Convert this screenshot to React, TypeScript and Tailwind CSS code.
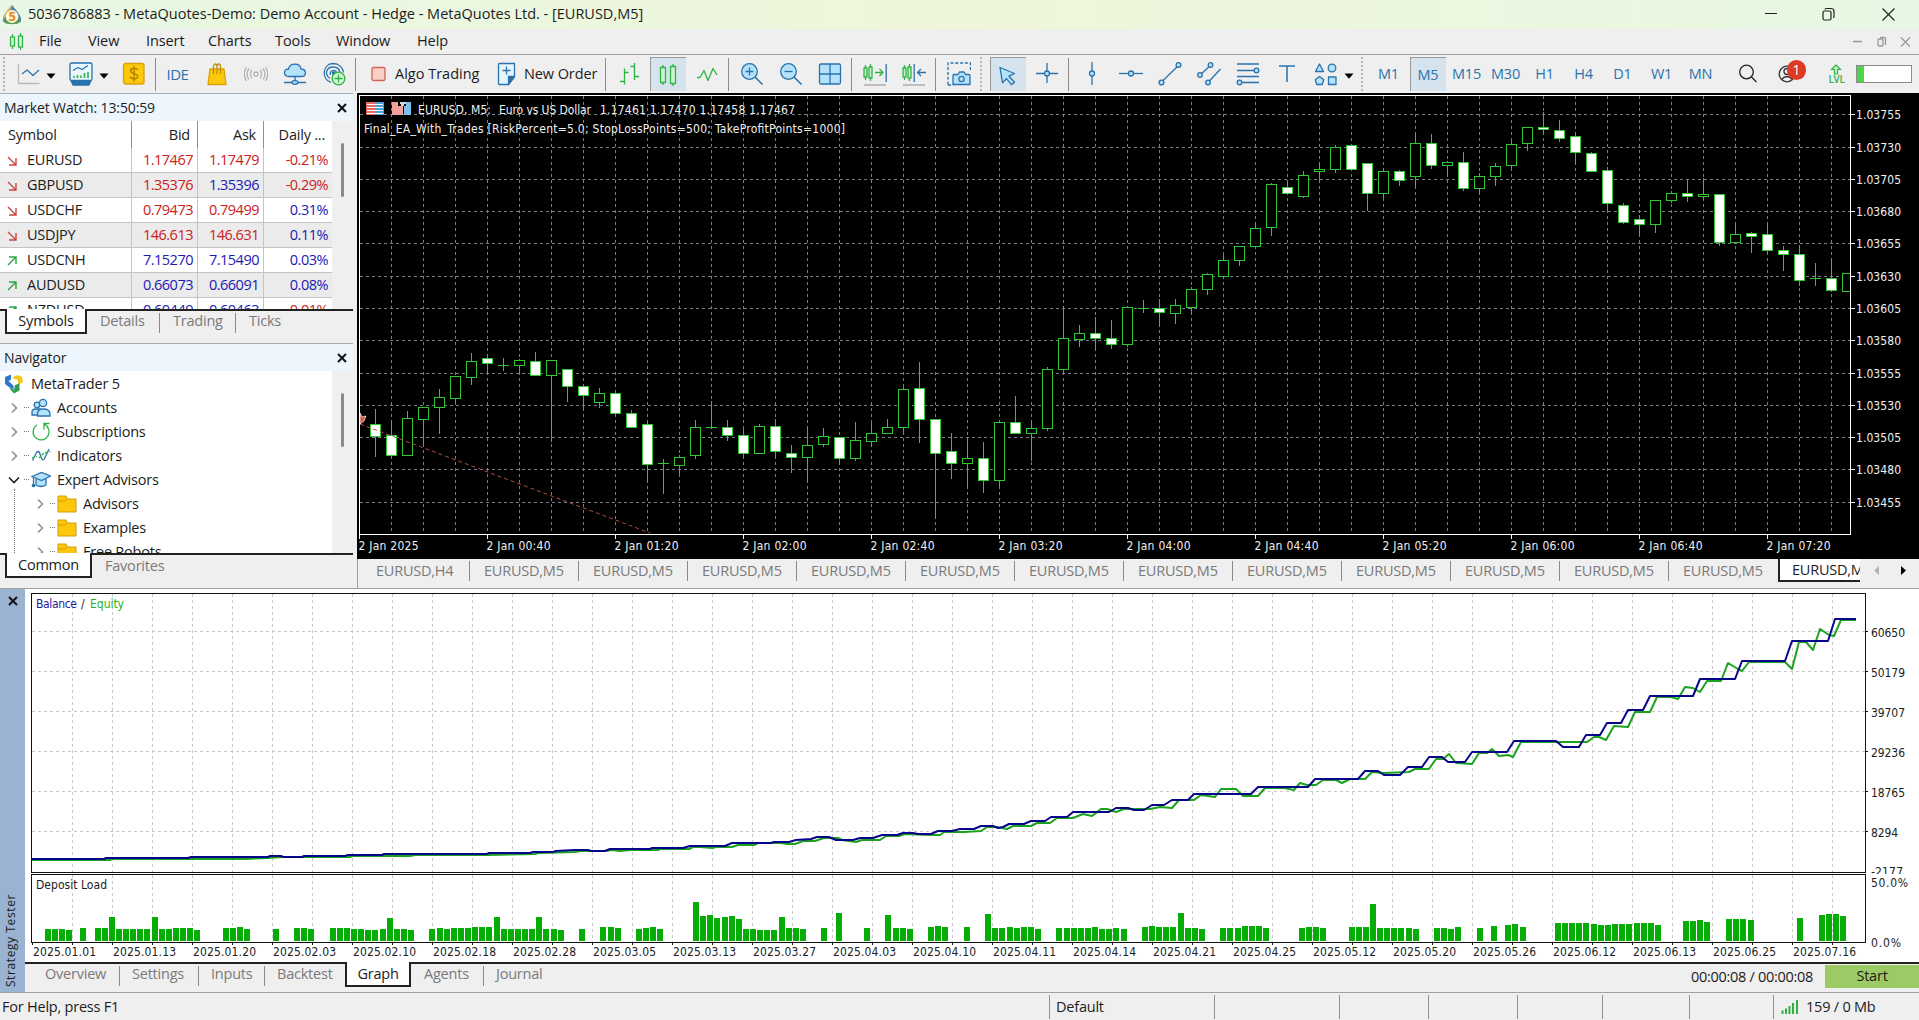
import type { ReactNode } from "react";

type Candle = [high: number, top: number, bottom: number, low: number, kind: "u" | "d" | "x"];

const BLUE = "#2a72ac";
const SKY = "#b5e2fb";
const GREEN = "#2eb344";

const CHART_FONT = "'DejaVu Sans Condensed', 'DejaVu Sans', sans-serif";

// One candle every 16px, starting one step right of the plot's left edge.
const candles: Candle[] = [
  [409, 424, 436, 456, "d"], [420, 435, 455, 457, "d"], [411, 418, 455, 455, "u"], [407, 407, 419, 445, "u"],
  [389, 397, 407, 433, "u"], [376, 376, 398, 402, "u"], [353, 361, 377, 384, "u"], [354, 358, 363, 373, "d"],
  [358, 365, 365, 371, "x"], [359, 360, 365, 372, "u"], [352, 361, 375, 375, "d"], [360, 360, 375, 441, "u"],
  [369, 369, 386, 401, "d"], [385, 386, 395, 408, "d"], [388, 393, 402, 407, "u"], [392, 393, 413, 415, "d"],
  [410, 413, 427, 427, "d"], [421, 424, 464, 481, "d"], [459, 463, 463, 494, "x"], [455, 457, 465, 473, "u"],
  [420, 427, 455, 458, "u"], [401, 427, 427, 429, "x"], [420, 427, 435, 440, "d"], [429, 435, 453, 457, "d"],
  [424, 426, 453, 453, "u"], [419, 426, 451, 457, "d"], [445, 453, 457, 472, "d"], [427, 445, 457, 481, "u"],
  [428, 436, 444, 446, "u"], [437, 437, 458, 463, "d"], [422, 440, 458, 460, "u"], [423, 433, 441, 446, "u"],
  [419, 427, 433, 433, "u"], [387, 389, 427, 433, "u"], [362, 388, 419, 442, "d"], [419, 419, 453, 517, "d"],
  [433, 451, 463, 478, "d"], [437, 458, 463, 488, "u"], [442, 458, 480, 492, "d"], [421, 422, 480, 486, "u"],
  [396, 422, 433, 433, "d"], [420, 428, 433, 460, "u"], [367, 369, 428, 430, "u"], [306, 338, 369, 371, "u"],
  [325, 333, 339, 346, "u"], [317, 333, 338, 349, "d"], [320, 338, 344, 348, "d"], [306, 307, 344, 346, "u"],
  [300, 308, 308, 313, "x"], [299, 308, 312, 325, "d"], [299, 305, 313, 323, "u"], [287, 289, 307, 313, "u"],
  [273, 274, 289, 294, "u"], [255, 260, 276, 278, "u"], [246, 246, 260, 265, "u"], [222, 228, 246, 247, "u"],
  [183, 184, 227, 235, "u"], [180, 187, 193, 194, "d"], [171, 175, 196, 197, "u"], [162, 169, 171, 180, "u"],
  [145, 147, 169, 172, "u"], [144, 145, 169, 170, "d"], [163, 163, 193, 210, "d"], [169, 171, 193, 197, "u"],
  [170, 171, 180, 185, "d"], [133, 143, 176, 186, "u"], [134, 143, 165, 168, "d"], [161, 162, 165, 176, "u"],
  [152, 162, 188, 190, "d"], [173, 176, 188, 193, "u"], [163, 166, 176, 185, "u"], [141, 144, 165, 167, "u"],
  [127, 127, 143, 150, "u"], [112, 127, 129, 133, "d"], [120, 130, 138, 141, "d"], [132, 136, 152, 163, "d"],
  [152, 153, 171, 171, "d"], [167, 170, 203, 209, "d"], [203, 205, 222, 223, "d"], [215, 219, 224, 234, "d"],
  [200, 200, 224, 232, "u"], [191, 193, 200, 202, "u"], [179, 193, 196, 201, "d"], [178, 194, 196, 199, "u"],
  [194, 194, 242, 245, "d"], [225, 234, 242, 243, "u"], [232, 233, 236, 252, "d"], [225, 234, 250, 253, "d"],
  [246, 250, 254, 270, "d"], [245, 254, 280, 285, "d"], [263, 278, 278, 286, "x"], [258, 278, 290, 291, "d"],
  [273, 273, 291, 291, "u"],
];

const priceGrid: [number, string][] = [
  [114, "1.03755"], [147, "1.03730"], [179, "1.03705"], [211, "1.03680"], [243, "1.03655"],
  [276, "1.03630"], [308, "1.03605"], [340, "1.03580"], [373, "1.03555"], [405, "1.03530"],
  [437, "1.03505"], [469, "1.03480"], [502, "1.03455"],
];

const timeLabels = [
  "2 Jan 2025", "2 Jan 00:40", "2 Jan 01:20", "2 Jan 02:00", "2 Jan 02:40", "2 Jan 03:20",
  "2 Jan 04:00", "2 Jan 04:40", "2 Jan 05:20", "2 Jan 06:00", "2 Jan 06:40", "2 Jan 07:20",
];

const balance =
  "32,859 104,859 106,858 188,858 191,857 268,857 270,856 281,856 283,857 302,857 304,856 345,856 348,855 382,855 384,854 487,854 489,853 530,853 533,852 553,852 556,851 575,850 588,850 591,851 605,851 610,849 650,849 652,848 683,848 690,846 725,846 732,843 771,843 774,842 789,842 796,840 811,839 817,837 829,837 836,840 853,840 860,838 873,838 882,835 897,835 903,833 913,833 918,834 931,834 938,831 952,831 960,829 974,829 981,826 993,826 998,828 1003,827 1009,824 1024,824 1031,821 1045,821 1051,817 1067,817 1073,812 1109,812 1116,808 1128,808 1134,810 1144,810 1152,805 1164,805 1172,800 1188,800 1194,794 1251,794 1258,787 1308,787 1315,779 1358,779 1365,771 1378,771 1384,775 1400,775 1408,767 1422,767 1429,757 1442,757 1448,762 1465,762 1472,752 1507,752 1514,741 1556,741 1563,747 1579,747 1586,735 1600,735 1607,723 1621,723 1628,710 1643,710 1650,696 1693,696 1700,679 1735,679 1742,661 1785,661 1792,641 1828,641 1835,619 1856,619";

const equity =
  "32,860 110,860 112,859 190,859 207,859 225,859 245,859 268,858 283,857 302,857 350,857 352,856 410,856 415,855 487,855 535,854 538,853 575,852 580,851 605,851 612,850 620,851 630,850 658,850 660,849 689,849 693,847 700,847 713,848 715,847 732,847 738,845 754,845 758,843 781,843 787,844 795,844 803,841 815,841 824,838 838,838 842,840 856,842 862,840 880,840 886,836 899,836 905,834 930,835 940,835 944,832 964,832 981,831 987,827 996,827 1007,829 1013,826 1031,826 1037,823 1050,823 1057,818 1073,818 1083,814 1092,816 1101,809 1107,809 1116,812 1124,809 1132,809 1150,809 1160,807 1172,808 1179,800 1194,800 1201,795 1215,797 1221,789 1236,789 1243,796 1258,796 1265,788 1284,788 1294,790 1300,783 1307,785 1316,785 1323,780 1336,780 1342,783 1350,779 1365,779 1372,772 1384,773 1409,772 1415,769 1429,769 1436,759 1443,759 1449,754 1456,763 1472,764 1479,753 1487,753 1492,749 1499,756 1508,755 1513,757 1521,742 1587,742 1594,737 1599,737 1606,740 1614,726 1628,727 1635,712 1650,712 1657,697 1671,697 1678,699 1685,687 1693,688 1700,692 1707,681 1721,681 1728,663 1738,669 1742,671 1749,662 1785,662 1792,669 1799,642 1806,642 1813,650 1820,629 1829,635 1834,636 1841,620 1856,620";

// [x, top] pairs of the deposit load histogram
const loadBars: [number, number][] = [
  [45, 929], [52, 929], [59, 929], [66, 930], [80, 928], [95, 928], [102, 928], [109, 917], [116, 929], [123, 929],
  [130, 929], [137, 929], [144, 929], [152, 917], [159, 929], [166, 929], [173, 928], [180, 928], [187, 928], [194, 930],
  [223, 928], [230, 928], [237, 927], [244, 929], [273, 929], [294, 928], [301, 928], [308, 929], [330, 928], [337, 928],
  [344, 928], [351, 929], [358, 929], [365, 930], [372, 930], [380, 929], [387, 918], [394, 929], [401, 929], [408, 930],
  [429, 929], [437, 928], [444, 929], [451, 928], [458, 928], [465, 928], [472, 927], [479, 927], [486, 927], [494, 917],
  [501, 929], [508, 929], [515, 929], [522, 929], [529, 929], [536, 917], [543, 929], [551, 929], [558, 930], [579, 929],
  [600, 927], [608, 927], [615, 928], [636, 929], [643, 928], [650, 927], [657, 929], [693, 902], [700, 916], [707, 915],
  [714, 918], [722, 917], [729, 916], [736, 919], [743, 929], [750, 929], [757, 930], [764, 930], [771, 930], [779, 917],
  [786, 928], [793, 928], [800, 929], [821, 928], [836, 913], [864, 928], [885, 915], [893, 928], [900, 928], [907, 929],
  [928, 927], [935, 926], [942, 927], [964, 927], [985, 914], [992, 928], [999, 928], [1007, 927], [1014, 928], [1021, 927],
  [1028, 927], [1035, 929], [1056, 928], [1064, 928], [1071, 928], [1078, 928], [1085, 928], [1092, 927], [1099, 929],
  [1106, 929], [1113, 928], [1121, 929], [1142, 927], [1149, 926], [1156, 927], [1163, 927], [1170, 927], [1178, 913],
  [1185, 928], [1192, 928], [1199, 929], [1220, 928], [1227, 928], [1235, 928], [1242, 926], [1249, 926], [1256, 926],
  [1263, 928], [1299, 928], [1306, 927], [1313, 927], [1320, 928], [1349, 927], [1356, 927], [1363, 927], [1370, 904],
  [1377, 928], [1384, 928], [1391, 928], [1398, 928], [1406, 928], [1413, 929], [1434, 928], [1441, 928], [1448, 929],
  [1455, 927], [1477, 928], [1491, 926], [1505, 925], [1512, 924], [1520, 927], [1555, 923], [1562, 923], [1569, 923],
  [1576, 923], [1583, 923], [1591, 924], [1598, 925], [1605, 925], [1612, 924], [1619, 924], [1626, 924], [1634, 923],
  [1641, 923], [1648, 923], [1655, 925], [1683, 921], [1690, 921], [1697, 920], [1704, 922], [1726, 919], [1733, 919],
  [1740, 919], [1748, 920], [1797, 918], [1819, 915], [1826, 914], [1833, 914], [1840, 916],
];

const balanceScale: [number, string, number][] = [
  [631, "60650", 34], [671, "50179", 34], [711, "39707", 34], [751, "29236", 34], [791, "18765", 34], [831, "8294", 27],
];

const testerDates = [
  "2025.01.01", "2025.01.13", "2025.01.20", "2025.02.03", "2025.02.10", "2025.02.18", "2025.02.28", "2025.03.05",
  "2025.03.13", "2025.03.27", "2025.04.03", "2025.04.10", "2025.04.11", "2025.04.14", "2025.04.21", "2025.04.25",
  "2025.05.12", "2025.05.20", "2025.05.26", "2025.06.12", "2025.06.13", "2025.06.25", "2025.07.16",
];

const RED_TEXT = "text-[#cc2020]";
const BLUE_TEXT = "text-[#1a1ab4]";

const quotes = [
  { symbol: "EURUSD", bid: "1.17467", ask: "1.17479", daily: "-0.21%", up: false, tones: [RED_TEXT, RED_TEXT, RED_TEXT] },
  { symbol: "GBPUSD", bid: "1.35376", ask: "1.35396", daily: "-0.29%", up: false, tones: [RED_TEXT, BLUE_TEXT, RED_TEXT] },
  { symbol: "USDCHF", bid: "0.79473", ask: "0.79499", daily: "0.31%", up: false, tones: [RED_TEXT, RED_TEXT, BLUE_TEXT] },
  { symbol: "USDJPY", bid: "146.613", ask: "146.631", daily: "0.11%", up: false, tones: [RED_TEXT, RED_TEXT, BLUE_TEXT] },
  { symbol: "USDCNH", bid: "7.15270", ask: "7.15490", daily: "0.03%", up: true, tones: [BLUE_TEXT, BLUE_TEXT, BLUE_TEXT] },
  { symbol: "AUDUSD", bid: "0.66073", ask: "0.66091", daily: "0.08%", up: true, tones: [BLUE_TEXT, BLUE_TEXT, BLUE_TEXT] },
  { symbol: "NZDUSD", bid: "0.60449", ask: "0.60463", daily: "-0.01%", up: true, tones: [BLUE_TEXT, BLUE_TEXT, RED_TEXT] },
];

export default function App() {
  return (
    <div className="flex h-[1020px] w-[1919px] flex-col overflow-hidden bg-[#efefef] font-['Open_Sans','Noto_Sans',sans-serif] text-[14.5px] leading-none tracking-[-0.22px] whitespace-nowrap text-[#1c1c1c]">
      <TitleBar />
      <MenuBar />
      <Toolbar />
      <div className="flex h-[495px] shrink-0">
        <div className="flex w-[353px] shrink-0 flex-col">
          <MarketWatch />
          <Navigator />
        </div>
        <div className="flex w-[1562px] shrink-0 flex-col pl-1">
          <PriceChart />
          <ChartTabs />
        </div>
      </div>
      <StrategyTester />
      <StatusBar />
    </div>
  );
}

function TitleBar() {
  return (
    <div className="flex h-[29px] shrink-0 items-center bg-linear-to-r from-[#e8f8e4] via-[#eff6da] to-[#e8f8e4]">
      <svg className="ml-[2px] size-5" viewBox="0 0 20 20">
        <path d="M10 0C6 5 0 11 1 16c1 4 17 4 18 0C20 11 14 5 10 0Z" fill="#4c86ad" />
        <path d="M10 0C6 5 0 11 1 16c2-6 8-8 9-16Z" fill="#d9b24a" />
        <path d="M2 17c3 3 13 3 16 0l-2-4H5Z" fill="#5f9d4f" />
        <circle cx="10" cy="11.5" r="6.4" fill="#fff3dc" />
        <text x="10" y="16.3" textAnchor="middle" fontSize="13" fontWeight="700" fill="#e58b1c">5</text>
      </svg>
      <span className="ml-[6px] tracking-normal">
        5036786883 - MetaQuotes-Demo: Demo Account - Hedge - MetaQuotes Ltd. - [EURUSD,M5]
      </span>
      <svg className="ml-auto h-[29px] w-[180px]" viewBox="0 0 180 29" fill="none" stroke="#222" strokeWidth="1.2">
        <path d="M26 13.5h12M143.500 8.500l12 12M155.500 8.500l-12 12" />
        <rect x="84" y="11" width="8" height="9" rx="1.500" />
        <path d="M86 9.500q0-1 1-1h5q3 0 3 3v5q0 1-1 1" />
      </svg>
    </div>
  );
}

function MenuBar() {
  return (
    <div className="flex h-[26px] shrink-0 items-center border-b border-[#a0a0a0] tracking-[-0.1px]">
      <svg className="ml-[9px] h-[20px] w-[16px]" viewBox="0 0 16 20" fill="#c9f5cf" stroke={GREEN} strokeWidth="1.2">
        <path d="M3.500 2v15M11.500 1v17" />
        <rect x="1.500" y="5" width="4" height="9" />
        <rect x="9.500" y="4" width="4" height="11" />
      </svg>
      <span className="ml-[14px] w-[49px]">File</span>
      <span className="w-[58px]">View</span>
      <span className="w-[62px]">Insert</span>
      <span className="w-[67px]">Charts</span>
      <span className="w-[61px]">Tools</span>
      <span className="w-[81px]">Window</span>
      <span>Help</span>
      <svg className="ml-auto h-[24px] w-[72px]" viewBox="0 0 72 24" fill="none" stroke="#999" strokeWidth="1.3">
        <path d="M6 11.500h9M54 7.500l9 9M63 7.500l-9 9" />
        <rect x="31" y="9" width="5" height="7" rx="1" />
        <path d="M33 7.500h4q1.500 0 1.500 1.500v6" />
      </svg>
    </div>
  );
}

function Slot({ active, children }: { active?: boolean; children: ReactNode }) {
  return (
    <div className="flex w-[39px] shrink-0 items-center justify-center">
      {active ? (
        <div className="flex h-[34px] w-9 items-center justify-center border-t border-l border-[#9a9a9a] bg-[#d5e3ef]">
          {children}
        </div>
      ) : (
        children
      )}
    </div>
  );
}

function Icon({ children, className = "" }: { children: ReactNode; className?: string }) {
  return (
    <svg
      className={`size-6 shrink-0 ${className}`}
      viewBox="0 0 24 24"
      fill="none"
      stroke={BLUE}
      strokeWidth="1.3"
      strokeLinejoin="round"
    >
      {children}
    </svg>
  );
}

function Separator() {
  return <div className="mr-[3px] ml-[2px] h-[33px] w-px shrink-0 bg-[#8c8c8c]" />;
}

function Grip({ className = "" }: { className?: string }) {
  return <div className={`h-[34px] w-[2px] shrink-0 border-l-2 border-dotted border-[#b4b4b4] ${className}`} />;
}

function DropArrow({ className = "" }: { className?: string }) {
  return (
    <svg className={`mt-1 h-[6px] w-[10px] shrink-0 ${className}`} viewBox="0 0 10 6">
      <path d="M0.500 0.500h9L5 5.800Z" fill="#000" />
    </svg>
  );
}

function Toolbar() {
  return (
    <div className="flex h-[38px] shrink-0 items-center">
      <Grip className="ml-[3px]" />
      <Icon className="ml-3">
        <path d="M1.500 2v19.500h21" stroke="#b9b9b9" />
        <path d="M5 12l5-4 6 5.500 6-5.500" />
      </Icon>
      <DropArrow className="ml-[5px]" />
      <Icon className="ml-[13px]">
        <path d="M2 18.500l2 4.500h16l2-4.500Z" fill={BLUE} />
        <rect x="1" y="1" width="22" height="17.500" rx="1.500" fill="#e9f6fe" />
        <path d="M4 8.500l5-3 4 2 6-4" />
        <path d="M5 16v-2M8.500 16v-3M12 16v-2.500M15.500 16v-5M19 16v-6" stroke={GREEN} strokeWidth="1.6" />
      </Icon>
      <DropArrow className="ml-[6px]" />
      <Icon className="ml-[13px]">
        <rect x="1.500" y="1.500" width="20.500" height="20.500" rx="2" fill="#fdc80c" stroke="#d9a105" />
        <path d="M15.500 8c-.5-2-7-2.500-7 .8 0 3.400 7.200 2 7.200 5.600 0 3.200-7 3-7.600.3M12 4v15.500" stroke="#a87c05" />
      </Icon>
      <div className="mr-[2px] ml-[9px] h-[33px] w-px shrink-0 bg-[#8c8c8c]" />
      <Slot>
        <span className="text-[15px] tracking-[-0.5px] text-[#2a72ac]">IDE</span>
      </Slot>
      <Slot>
        <Icon>
          <path d="M5 7h14l2 15.500H3Z" fill="#fdc80c" stroke="#d9a105" />
          <path d="M8.500 12V5c0-4 3.500-4 3.500 0v7M12 5c0-4 3.500-4 3.500 0v7" stroke="#c08e05" />
        </Icon>
      </Slot>
      <Slot>
        <Icon>
          <g stroke="#b4b4b4">
            <circle cx="12" cy="12" r="2" />
            <path d="M8 8q-3 4 0 8M16 8q3 4 0 8M5 6.500q-4 5.500 0 11M19 6.500q4 5.500 0 11M2.500 5q-4.500 7 0 14M21.500 5q4.500 7 0 14" />
          </g>
        </Icon>
      </Slot>
      <Slot>
        <Icon>
          <path d="M6 14.500c-6 0-6-7.500-.5-7.500C7 .5 17 .5 18 7c6 .5 6 7.500 0 7.500Z" fill={SKY} />
          <path d="M12 14.500v5M1 20.500h8M15 20.500h8" />
          <ellipse cx="12" cy="20.500" rx="3" ry="1.800" fill={SKY} />
        </Icon>
      </Slot>
      <Slot>
        <Icon>
          <path d="M9 20.500C-1 17 .5 2 11 1.500c6 0 10 4 10.500 9M8 16.500C1.500 12 5 5 11 5c4 0 6.500 2 7 5.500M8.500 13c-2-4 4.500-6.500 6-2.500" />
          <circle cx="11.500" cy="11" r="1.200" fill={BLUE} />
          <circle cx="16.500" cy="16.500" r="6.300" fill="#d4f7d9" stroke={GREEN} />
          <path d="M16.500 12.500v8M12.500 16.500h8" stroke={GREEN} />
        </Icon>
      </Slot>
      <Separator />
      <Icon className="ml-[8px]">
        <rect x="5" y="5.500" width="13" height="13" rx="1.500" fill="#f9cfc6" stroke="#cf6355" />
      </Icon>
      <span className="ml-[4px] w-[100px] tracking-normal">Algo Trading</span>
      <Icon>
        <path d="M4.500 1.500h15v13l-6 8h-9q-1 0-1-1v-19q0-1 1-1Z" fill="#e6f4fd" />
        <path d="M19.500 14.500l-6 8v-8Z" fill={BLUE} />
        <path d="M11.500 4.500v8M7.500 8.500h8" />
      </Icon>
      <span className="ml-[5px] w-[79px] tracking-[-0.1px]">New Order</span>
      <Separator />
      <Slot>
        <Icon>
          <path d="M7.500 6.500v16M3 19.500h4.500M7.500 10.500h4M17.500 1v17M13.500 4.500h4M17.500 14.500h4.500" stroke={GREEN} />
        </Icon>
      </Slot>
      <Slot active>
        <Icon>
          <g stroke={GREEN} fill="#c9f5cf">
            <path d="M7 2v20M17 1v22" />
            <rect x="4.500" y="4.500" width="5" height="15" />
            <rect x="14.500" y="3.500" width="5" height="17" />
          </g>
        </Icon>
      </Slot>
      <Slot>
        <Icon>
          <path d="M2 15.500h3l4-7 4 10 5-12 4 6.500" stroke={GREEN} />
        </Icon>
      </Slot>
      <Separator />
      <Slot>
        <ZoomIcon plus />
      </Slot>
      <Slot>
        <ZoomIcon />
      </Slot>
      <Slot>
        <Icon>
          <rect x="1.500" y="2" width="21" height="20" rx="1.500" fill={SKY} />
          <path d="M12 2v20M1.500 12h21" />
        </Icon>
      </Slot>
      <Separator />
      <Slot>
        <ShiftIcon>
          <path d="M12 10.500h8M16.500 7l3.500 3.500-3.500 3.500" stroke={GREEN} />
          <path d="M23.200 2v18" />
        </ShiftIcon>
      </Slot>
      <Slot>
        <ShiftIcon>
          <path d="M12.200 2v18M15.500 10.500h8.500M19 7l-3.500 3.500 3.500 3.500" />
        </ShiftIcon>
      </Slot>
      <Separator />
      <Slot>
        <Icon>
          <path d="M1 22.500V1h22.500v8M1 23h5" strokeDasharray="3 1.800" />
          <path d="M7 12.500h4l1.500-2.500h4.500l1.500 2.500h3.500q1 0 1 1v9h-17v-9q0-1 1-1Z" fill={SKY} />
          <circle cx="14.500" cy="17" r="2.600" />
        </Icon>
      </Slot>
      <Grip className="ml-[2px]" />
      <div className="w-[6px] shrink-0" />
      <Slot active>
        <Icon>
          <path d="M4 4.500l14.500 6-5.500 2.700 5.500 6-3 2.500-5-6-4 4Z" fill={SKY} />
        </Icon>
      </Slot>
      <Slot>
        <Icon>
          <path d="M12 1v20M1 11.500h22" />
          <circle cx="12" cy="11.500" r="2.500" fill={SKY} />
        </Icon>
      </Slot>
      <Separator />
      <Slot>
        <Icon>
          <path d="M12 0v23" />
          <circle cx="12" cy="11.500" r="2.500" fill={SKY} />
        </Icon>
      </Slot>
      <Slot>
        <Icon>
          <path d="M0 11.500h24" />
          <circle cx="12" cy="11.500" r="2.500" fill={SKY} />
        </Icon>
      </Slot>
      <Slot>
        <Icon>
          <path d="M3 20.500L21 3" />
          <circle cx="3.500" cy="20.500" r="2.400" fill={SKY} />
          <circle cx="20.500" cy="3" r="2.400" fill={SKY} />
        </Icon>
      </Slot>
      <Slot>
        <Icon>
          <path d="M3 13L14 3M11 20.500L23.500 7" />
          <circle cx="3" cy="13" r="2.300" fill={SKY} />
          <circle cx="13.500" cy="3" r="2.300" fill={SKY} />
          <circle cx="11" cy="20.500" r="2.300" fill={SKY} />
        </Icon>
      </Slot>
      <Slot>
        <Icon>
          <path d="M1 2h22M1 8.500h17M1 14.500h22M6 20.500h17" />
          <circle cx="20.500" cy="8.500" r="2.300" fill={SKY} />
          <circle cx="3.500" cy="20.500" r="2.300" fill={SKY} />
        </Icon>
      </Slot>
      <Slot>
        <Icon>
          <path d="M4 4h16M12 4v16" strokeWidth="1.500" />
        </Icon>
      </Slot>
      <Slot>
        <Icon>
          <g fill={SKY}>
            <path d="M5.500 2l4 7.500h-8Z" />
            <circle cx="18" cy="6" r="3.800" />
            <path d="M5.500 14.500l4.300 3.300-1.600 4.700h-5.400l-1.600-4.700Z" />
            <rect x="14.500" y="15" width="7.500" height="7.500" />
          </g>
        </Icon>
      </Slot>
      <DropArrow className="-ml-px" />
      <Grip className="mr-[6px] ml-[7px]" />
      {["M1", "M5", "M15", "M30", "H1", "H4", "D1", "W1", "MN"].map((frame) => (
        <Slot key={frame} active={frame === "M5"}>
          <span className="pt-px text-[#2a72ac]">{frame}</span>
        </Slot>
      ))}
      <div className="w-[8px] shrink-0" />
      <Slot>
        <Icon>
          <circle cx="10.500" cy="10" r="6.800" stroke="#222" />
          <path d="M15.500 15l5 5" stroke="#222" />
        </Icon>
      </Slot>
      <div className="relative flex w-[50px] shrink-0 items-center pl-[9px]">
        <Icon>
          <g stroke="#333">
            <circle cx="11" cy="12" r="7.800" />
            <circle cx="11" cy="9.500" r="3" />
            <path d="M5.500 17.500q5.500-6 11 0" />
          </g>
        </Icon>
        <span className="absolute top-[-2px] left-[20px] flex h-[20px] w-[19px] items-center justify-center rounded-full bg-[#dc3a22] text-[14px] tracking-normal text-white">
          1
        </span>
      </div>
      <Slot>
        <div className="flex flex-col items-center text-[#2eb344]">
          <svg className="h-[11px] w-[12px]" viewBox="0 0 12 11" fill="#c9f5cf" stroke={GREEN} strokeWidth="1.2">
            <path d="M6 1l4.500 4.500h-3v4.500h-3V5.500h-3Z" />
          </svg>
          <span className="text-[10px] leading-[9px] font-semibold tracking-[-0.3px]">LVL</span>
        </div>
      </Slot>
      <div className="flex h-[18px] w-[56px] shrink-0 border border-[#8c8c8c] bg-white">
        <div className="w-[7px] bg-[#4fd349]" />
      </div>
    </div>
  );
}

function ZoomIcon({ plus }: { plus?: boolean }) {
  return (
    <Icon>
      <path d="M15 15l7.500 7.500" strokeWidth="1.600" />
      <circle cx="9.500" cy="9.500" r="7.800" fill={SKY} />
      <path d={plus ? "M5.500 9.500h8M9.500 5.500v8" : "M5.500 9.500h8"} />
    </Icon>
  );
}

function ShiftIcon({ children }: { children: ReactNode }) {
  return (
    <Icon>
      <g stroke={GREEN} fill="#c9f5cf">
        <path d="M2.500 3v15M7.500 2v17" />
        <rect x="1" y="6" width="3" height="9" />
        <rect x="6" y="5" width="3" height="11" />
      </g>
      {children}
      <path d="M1 23h22" stroke="#a5a5a5" />
    </Icon>
  );
}

function PanelHeader({ title }: { title: string }) {
  return (
    <div className="flex h-[28px] shrink-0 items-center border-t border-[#a9adb1] bg-[#edf6fd] pr-[6px] pl-[4px] text-[14px] tracking-[-0.12px]">
      <span>{title}</span>
      <svg className="ml-auto size-[10px]" viewBox="0 0 10 10" stroke="#111" strokeWidth="2">
        <path d="M1 1l8 8M9 1L1 9" />
      </svg>
    </div>
  );
}

function ScrollColumn() {
  return (
    <div className="flex w-[21px] shrink-0 justify-center bg-[#efefef] pt-[22px]">
      <div className="h-[54px] w-[3px] rounded-full bg-[#8a8a8a]" />
    </div>
  );
}

function MarketWatch() {
  const cell = "flex items-center justify-end border-l border-[#c4c4c4] pt-px pr-[4px] tracking-[-0.5px]";
  const heading = "flex items-center justify-end border-l border-[#8f8f8f] pt-px pr-[7px]";
  return (
    <div className="flex h-[250px] shrink-0 flex-col">
      <PanelHeader title="Market Watch: 13:50:59" />
      <div className="flex h-[188px] shrink-0 overflow-hidden">
        <div className="w-[332px] bg-white">
          <div className="grid h-[27px] grid-cols-[131px_66px_66px_69px]">
            <div className="flex items-center pt-px pl-2">Symbol</div>
            <div className={heading}>Bid</div>
            <div className={heading}>Ask</div>
            <div className={heading}>Daily ...</div>
          </div>
          {quotes.map((quote, index) => (
            <div
              key={quote.symbol}
              className={`grid h-[25px] grid-cols-[131px_66px_66px_69px] border-b border-[#c4c4c4] ${index % 2 ? "bg-[#ebebeb]" : ""}`}
            >
              <div className="flex items-center pt-px">
                <svg
                  className="mr-[10px] ml-[7px] size-[10px]"
                  viewBox="0 0 10 10"
                  fill="none"
                  stroke={quote.up ? "#2aa543" : "#cc4444"}
                  strokeWidth="1.4"
                >
                  <path d={quote.up ? "M1 9l7.500-7.500M2 1h7v7" : "M1 1l7.500 7.500M9 2v7H2"} />
                </svg>
                {quote.symbol}
              </div>
              <div className={`${cell} ${quote.tones[0]}`}>{quote.bid}</div>
              <div className={`${cell} ${quote.tones[1]}`}>{quote.ask}</div>
              <div className={`${cell} ${quote.tones[2]}`}>{quote.daily}</div>
            </div>
          ))}
        </div>
        <ScrollColumn />
      </div>
      <div className="flex h-[34px] shrink-0 text-[#7a7a7a]">
        <div className="w-[5px] border-t-2 border-[#222]" />
        <ActiveTab className="w-[82px]">Symbols</ActiveTab>
        <div className="flex grow items-start border-t-2 border-[#222]">
          <span className="w-[72px] pt-[3px] pl-[13px]">Details</span>
          <TabRule />
          <span className="w-[75px] pt-[3px] pl-[13px]">Trading</span>
          <TabRule />
          <span className="pt-[3px] pl-[13px]">Ticks</span>
        </div>
      </div>
    </div>
  );
}

function ActiveTab({ className, children }: { className: string; children: ReactNode }) {
  return (
    <div
      className={`flex h-[25px] shrink-0 items-center justify-center border-2 border-t-0 border-[#222] bg-white pt-px text-[#1c1c1c] ${className}`}
    >
      {children}
    </div>
  );
}

function TabRule() {
  return <div className="mt-[2px] h-5 w-px shrink-0 bg-[#8a8a8a]" />;
}

function TreeRow({ nested, open, label, icon }: { nested?: boolean; open?: boolean; label: string; icon: ReactNode }) {
  return (
    <div className={`flex h-6 shrink-0 items-center pt-px ${nested ? "pl-[34px]" : "pl-[8px]"}`}>
      <svg className="size-[12px] shrink-0" viewBox="0 0 12 12" fill="none" strokeWidth="1.600">
        {open ? <path d="M1 3.500l5 5 5-5" stroke="#222" /> : <path d="M4 1.500l4.500 4.500L4 10.500" stroke="#8f8f8f" />}
      </svg>
      <div className="mr-[2px] ml-[4px] w-[5px] border-t border-dotted border-[#777]" />
      <svg className="size-[20px] shrink-0" viewBox="0 0 20 20" fill="none" stroke={BLUE} strokeWidth="1.3">
        {icon}
      </svg>
      <span className="ml-[6px] pt-px">{label}</span>
    </div>
  );
}

const folder = (
  <g fill="#fdc80c" stroke="#d39c07" strokeWidth="1">
    <path d="M1 2h8l1.500 3H19v13H1Z" />
    <path d="M1 7h7l2-2" fill="none" />
  </g>
);

function Navigator() {
  return (
    <div className="flex h-[245px] shrink-0 flex-col">
      <PanelHeader title="Navigator" />
      <div className="flex h-[182px] shrink-0 overflow-hidden">
        <div className="relative flex w-[332px] flex-col bg-white">
          <div className="flex h-6 shrink-0 items-center pt-px pl-[4px]">
            <svg className="size-[20px]" viewBox="0 0 20 20">
              <path d="M1 3l6-2.500v5L4.500 7l5 4.500v5L1 10Z" fill="#2a78cf" />
              <path d="M8 4q5-5 10-1l1 5-5 3V6Z" fill="#f7c61d" />
              <path d="M5 14l5 2 1-5 4.500-1.500v7L10 19.500Z" fill="#2f9d49" />
            </svg>
            <span className="ml-[7px] pt-px">MetaTrader 5</span>
          </div>
          <TreeRow
            label="Accounts"
            icon={
              <g fill={SKY}>
                <circle cx="6" cy="7" r="2.800" />
                <path d="M1 17v-3q0-3 4-3h4v6Z" />
                <circle cx="12" cy="5" r="3.600" />
                <path d="M6.500 18v-2q0-5 5.500-5 7 0 7 5v2Z" />
              </g>
            }
          />
          <TreeRow
            label="Subscriptions"
            icon={<path d="M6 3A8 8 0 1 0 16 4.500M18.500 1.500h-5.500V7.500M13.500 2l4 3.500" stroke={GREEN} />}
          />
          <TreeRow
            label="Indicators"
            icon={
              <>
                <path d="M1.500 14.500l4-8q1.500-2 3 0l2 6q1.500 2.500 3 0L18 3" />
                <path d="M1 12l5-1.500M8 12l5-5 6-1.500" stroke={GREEN} strokeDasharray="3 1" />
              </>
            }
          />
          <TreeRow
            open
            label="Expert Advisors"
            icon={
              <g fill={SKY}>
                <path d="M5 9v6q5 3 10 0V9" />
                <path d="M1 6.500l9.500-4 9 3.500-9 4.500Z" />
                <path d="M2.500 7v9" />
                <circle cx="2.500" cy="15.500" r="1.200" fill={BLUE} />
              </g>
            }
          />
          <TreeRow nested label="Advisors" icon={folder} />
          <TreeRow nested label="Examples" icon={folder} />
          <TreeRow nested label="Free Robots" icon={folder} />
          <div className="absolute top-[118px] left-[14px] h-[64px] border-l border-dotted border-[#777]" />
        </div>
        <ScrollColumn />
      </div>
      <div className="flex h-[34px] shrink-0 text-[#7a7a7a]">
        <div className="w-[5px] border-t-2 border-[#222]" />
        <ActiveTab className="w-[87px]">Common</ActiveTab>
        <div className="grow border-t-2 border-[#222] pt-[4px] pl-[13px]">Favorites</div>
      </div>
    </div>
  );
}

function PriceChart() {
  const gridXs = Array.from({ length: 46 }, (_, i) => 391 + i * 32);
  return (
    <svg
      className="h-[466px] w-[1562px] shrink-0 bg-black"
      viewBox="357 93 1562 466"
      fontFamily={CHART_FONT}
      fontSize="12"
      letterSpacing="0"
      shapeRendering="crispEdges"
    >
      <g stroke="#727f8c" strokeDasharray="3 3">
        {gridXs.map((x) => (
          <path key={x} d={`M${x + 0.5} 96V534`} />
        ))}
        {priceGrid.map(([y]) => (
          <path key={y} d={`M360 ${y + 0.5}H1851`} />
        ))}
      </g>
      <clipPath id="plot">
        <rect x="360" y="95" width="1491" height="439" />
      </clipPath>
      <g clipPath="url(#plot)" stroke="#2fc62f">
        {candles.map(([high, top, bottom, low, kind], i) => {
          const x = 375.5 + i * 16;
          if (kind === "x") {
            return <path key={i} d={`M${x} ${high}V${low}M${x - 5.5} ${top + 0.5}h11`} />;
          }
          return (
            <g key={i}>
              <path d={`M${x} ${high}V${low + 1}`} />
              <rect
                x={x - 5}
                y={top + 0.5}
                width="10"
                height={bottom - top}
                fill={kind === "u" ? "#000" : "#fff"}
              />
            </g>
          );
        })}
      </g>
      <path d="M360 424L650 533" stroke="#b0503c" strokeDasharray="4 3" shapeRendering="auto" />
      <path d="M360 413l2 4 4-1-2 5-4 3Z" fill="#e0503a" stroke="#fff" strokeWidth="0.7" shapeRendering="auto" />
      <path d="M359.500 534V95.500H1850.500V534.500H359" stroke="#fff" fill="none" />
      <g fill="#f0f0f0">
        {priceGrid.map(([y, label]) => (
          <g key={label}>
            <path d={`M1851 ${y + 0.5}h4`} stroke="#fff" />
            <text x="1856" y={y + 5} textLength="45">{label}</text>
          </g>
        ))}
        {timeLabels.map((label, i) => (
          <g key={label}>
            <path d={`M${359.5 + i * 128} 534v5`} stroke="#fff" />
            <text x={358.5 + i * 128} y="550" textLength={i ? 64 : 60}>{label}</text>
          </g>
        ))}
        <text x="418" y="113.500" textLength="73">EURUSD, M5:</text>
        <text x="499" y="113.500" textLength="92">Euro vs US Dollar</text>
        <text x="600" y="113.500" textLength="195">1.17461 1.17470 1.17458 1.17467</text>
        <text x="364" y="133" textLength="481">
          Final_EA_With_Trades [RiskPercent=5.0; StopLossPoints=500; TakeProfitPoints=1000]
        </text>
      </g>
      <g>
        <rect x="366" y="102" width="9" height="13" fill="#e46a62" />
        <rect x="375" y="102" width="9" height="13" fill="#4b9edb" />
        <path d="M367 104.500h16M367 107.500h16M367 110.500h16M367 113.500h16" stroke="#fff" />
        <path d="M392 102h6v4h5v9h-11Z" fill="#f3a09a" />
        <path d="M404 115v-9h2v-4h5v13Z" fill="#7cc0f0" />
        <path d="M400 102h6v2h-2v2h-3v-2h-1Z" fill="#d8d8d8" />
      </g>
    </svg>
  );
}

function ChartTabs() {
  return (
    <div className="flex h-[29px] shrink-0 border-l border-[#a0a0a0] text-[#7a7a7a]">
      {Array.from({ length: 13 }, (_, i) => (
        <div key={i} className={`flex shrink-0 items-start ${i === 0 ? "w-[112px]" : "w-[109px]"}`}>
          <span className={`grow pt-[5px] ${i === 0 ? "pl-[18px]" : "pl-[14px]"}`}>
            {i === 0 ? "EURUSD,H4" : "EURUSD,M5"}
          </span>
          {i < 12 && <div className="mt-[2px] h-5 w-px shrink-0 bg-[#8a8a8a]" />}
        </div>
      ))}
      <div className="h-[23px] w-[82px] shrink-0 overflow-hidden border-b-2 border-l-2 border-[#222] bg-white pt-[4px] pl-[12px] text-[#1c1c1c]">
        EURUSD,M5
      </div>
      <svg className="h-[24px] w-[60px] shrink-0" viewBox="0 0 60 24">
        <path d="M19 7v9l-5-4.500Z" fill="#b4b4b4" />
        <path d="M41 7v9l5-4.500Z" fill="#000" />
      </svg>
    </div>
  );
}

function StrategyTester() {
  return (
    <div className="flex h-[404px] shrink-0 border-t border-[#a0a0a0]">
      <div className="flex w-[25px] shrink-0 flex-col items-center justify-between bg-[#99b3d0] pt-[7px] pb-[5px]">
        <svg className="size-[10px]" viewBox="0 0 10 10" stroke="#111" strokeWidth="2">
          <path d="M1 1l8 8M9 1L1 9" />
        </svg>
        <span className="mr-[4px] rotate-180 text-[12px] leading-[14px] tracking-[0.6px] [writing-mode:vertical-rl]">
          Strategy Tester
        </span>
      </div>
      <div className="flex w-[1894px] shrink-0 flex-col">
        <TesterGraph />
        <div className="flex h-[30px] shrink-0 text-[#7a7a7a]">
          <div className="flex w-[320px] shrink-0 border-t-2 border-[#222]">
            <span className="w-[94px] pt-[3px] pl-[20px]">Overview</span>
            <TabRule />
            <span className="w-[78px] pt-[3px] pl-[12px]">Settings</span>
            <TabRule />
            <span className="w-[65px] pt-[3px] pl-[12px]">Inputs</span>
            <TabRule />
            <span className="pt-[3px] pl-[12px]">Backtest</span>
          </div>
          <ActiveTab className="w-[66px]">Graph</ActiveTab>
          <div className="flex grow border-t-2 border-[#222]">
            <span className="w-[72px] pt-[3px] pl-[13px]">Agents</span>
            <TabRule />
            <span className="pt-[3px] pl-[12px]">Journal</span>
            <span className="mr-[12px] ml-auto pt-[6px] tracking-[-0.3px] text-[#1c1c1c]">00:00:08 / 00:00:08</span>
            <div className="mt-[1px] flex h-[23px] w-[94px] items-center justify-center bg-[#9ccb66] text-[#1c1c1c]">
              Start
            </div>
          </div>
        </div>
      </div>
    </div>
  );
}

function TesterGraph() {
  const gridXs = Array.from({ length: 45 }, (_, i) => 72 + i * 40);
  return (
    <svg
      className="h-[373px] w-[1894px] shrink-0 bg-white"
      viewBox="25 589 1894 373"
      fontFamily={CHART_FONT}
      fontSize="12"
      letterSpacing="0"
      shapeRendering="crispEdges"
    >
      <g stroke="#c9c9c9" strokeDasharray="3 3">
        {gridXs.map((x) => (
          <path key={x} d={`M${x + 0.5} 594V872M${x + 0.5} 875V942`} />
        ))}
        {balanceScale.map(([y]) => (
          <path key={y} d={`M32 ${y + 0.5}H1866`} />
        ))}
      </g>
      <g fill="#06ad06">
        {loadBars.map(([x, top]) => (
          <rect key={x} x={x} y={top} width="6" height={941 - top} />
        ))}
      </g>
      <g fill="none" strokeWidth="2" shapeRendering="auto" strokeLinejoin="round">
        <polyline points={equity} stroke="#1ba31f" />
        <polyline points={balance} stroke="#06068a" />
      </g>
      <g fill="none" stroke="#111">
        <rect x="31.500" y="593.500" width="1834" height="279" />
        <rect x="31.500" y="874.500" width="1834" height="68" />
        {[32, ...gridXs].map((x) => (
          <path key={x} d={`M${x + 0.5} 942v3`} />
        ))}
        {balanceScale.map(([y]) => (
          <path key={y} d={`M1866 ${y + 0.5}h2`} />
        ))}
      </g>
      <g fill="#1c1c1c">
        <text x="36" y="608" textLength="41" fill="#1b1b9c">Balance</text>
        <text x="81" y="608">/</text>
        <text x="90" y="608" textLength="34" fill="#1fb41f">Equity</text>
        <text x="36" y="889" textLength="71">Deposit Load</text>
        {balanceScale.map(([y, label, width]) => (
          <text key={label} x="1871" y={y + 6} textLength={width}>{label}</text>
        ))}
        <text x="1871" y="876" textLength="32">-2177</text>
        <rect x="1867" y="874" width="50" height="4" fill="#fff" />
        <text x="1871" y="887" textLength="37">50.0%</text>
        <text x="1871" y="947" textLength="30">0.0%</text>
        {testerDates.map((label, i) => (
          <text key={label} x={33 + i * 80} y="956" textLength="63">{label}</text>
        ))}
      </g>
    </svg>
  );
}

function StatusBar() {
  return (
    <div className="flex h-[28px] shrink-0 items-center border-t border-[#a0a0a0]">
      <span className="w-[1049px] shrink-0 pt-px pl-[2px]">For Help, press F1</span>
      <div className="flex h-[24px] w-[165px] shrink-0 items-center border-l border-[#909090] pt-px pl-[6px]">Default</div>
      <div className="h-[24px] w-[125px] shrink-0 border-l border-[#909090]" />
      <div className="h-[24px] w-[89px] shrink-0 border-l border-[#909090]" />
      <div className="h-[24px] w-[89px] shrink-0 border-l border-[#909090]" />
      <div className="h-[24px] w-[85px] shrink-0 border-l border-[#909090]" />
      <div className="h-[24px] w-[87px] shrink-0 border-l border-[#909090]" />
      <div className="h-[24px] w-[84px] shrink-0 border-l border-[#909090]" />
      <div className="flex h-[24px] grow items-center border-l border-[#909090] pl-[7px]">
        <svg className="h-[14px] w-[18px]" viewBox="0 0 18 14" stroke="#35ad45" strokeWidth="2">
          <path d="M1.500 14v-3.500M5 14V8.500M8.500 14V6M12 14V3M16 14V0" />
        </svg>
        <span className="ml-[7px] pt-px">159 / 0 Mb</span>
      </div>
    </div>
  );
}
